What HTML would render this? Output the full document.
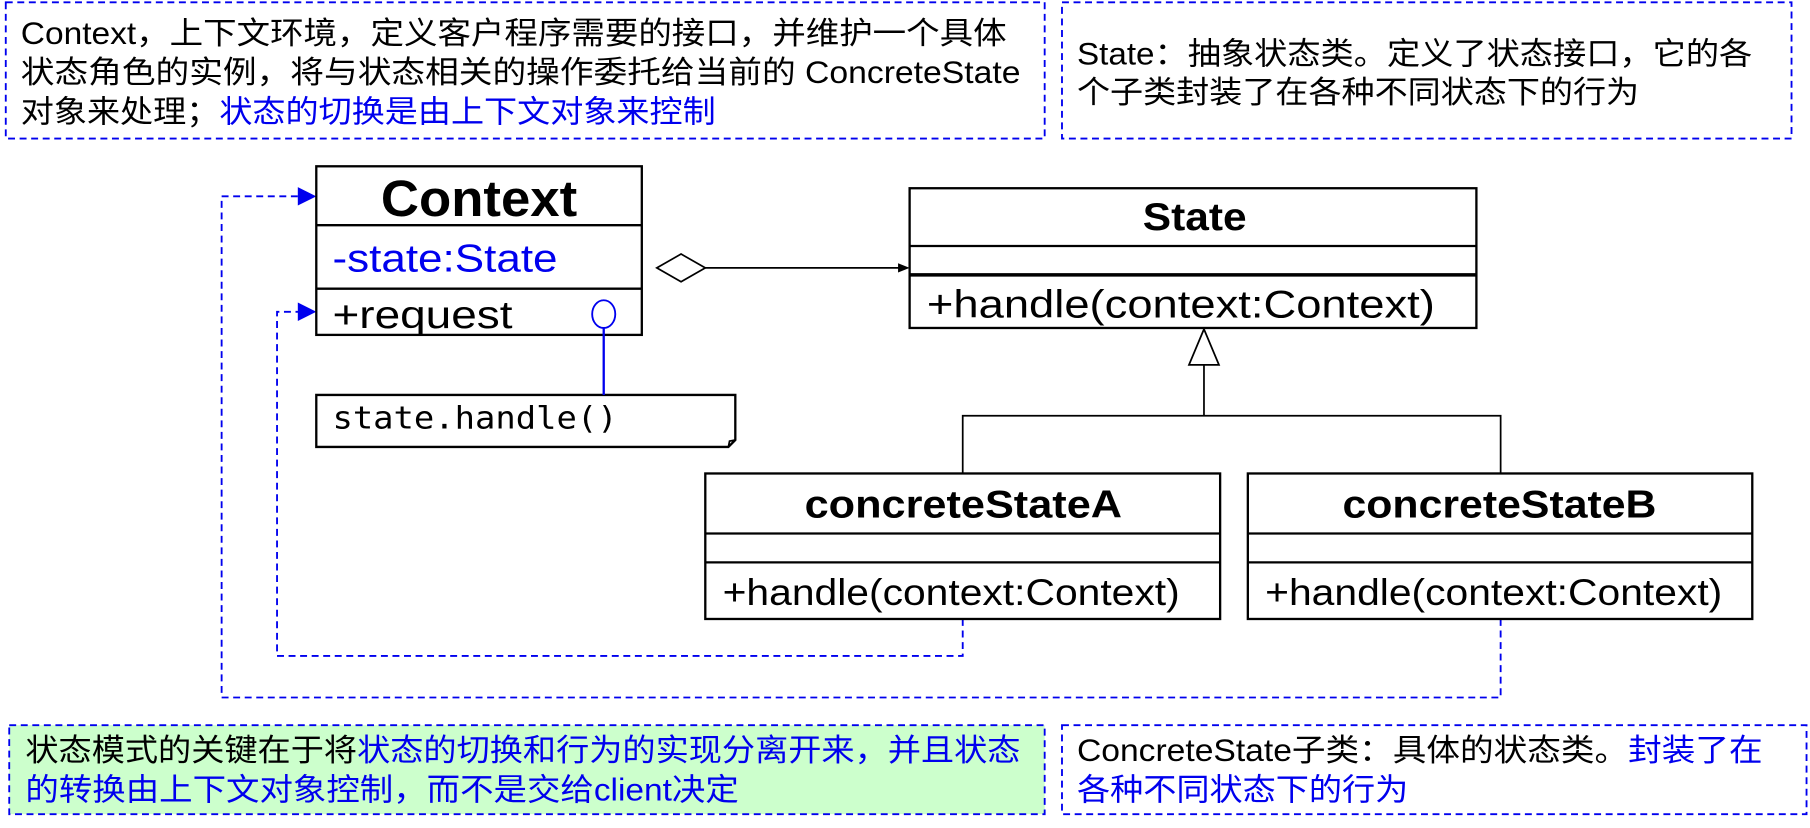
<!DOCTYPE html>
<html><head><meta charset="utf-8"><style>
html,body{margin:0;padding:0;background:#fff;}
svg{display:block;}
text{font-family:"Liberation Sans","Noto Sans CJK SC",sans-serif;}
</style></head><body>
<svg width="1810" height="828" viewBox="0 0 1568 717" preserveAspectRatio="none" xmlns="http://www.w3.org/2000/svg">
<g fill="none" stroke="#0000ee" stroke-width="1.6" stroke-dasharray="6,4">
<rect x="5" y="2" width="900" height="118"/>
<rect x="920" y="2" width="632" height="118"/>
<rect x="8" y="628" width="897" height="77" fill="#ccffcc"/>
<rect x="920" y="628" width="645" height="77"/>
<polyline points="834,536 834,568 240,568 240,270 260,270"/>
<polyline points="1300,536 1300,604 192,604 192,170 260,170"/>
</g>
<polygon points="258,162 274,170 258,178" fill="#0000ee"/>
<polygon points="258,262 274,270 258,278" fill="#0000ee"/>
<g font-size="27" fill="#000" lengthAdjust="spacingAndGlyphs">
<text x="18" y="38" textLength="854" lengthAdjust="spacingAndGlyphs">Context，上下文环境，定义客户程序需要的接口，并维护一个具体</text>
<text x="18" y="72" textLength="866" lengthAdjust="spacingAndGlyphs">状态角色的实例，将与状态相关的操作委托给当前的 ConcreteState</text>
<text x="18" y="106" textLength="602" lengthAdjust="spacingAndGlyphs">对象来处理；<tspan fill="#0000ee">状态的切换是由上下文对象来控制</tspan></text>
<text x="933" y="56" textLength="585" lengthAdjust="spacingAndGlyphs">State：抽象状态类。定义了状态接口，它的各</text>
<text x="933" y="89" textLength="487" lengthAdjust="spacingAndGlyphs">个子类封装了在各种不同状态下的行为</text>
<text x="22" y="659" textLength="862" lengthAdjust="spacingAndGlyphs">状态模式的关键在于将<tspan fill="#0000ee">状态的切换和行为的实现分离开来，并且状态</tspan></text>
<text x="22" y="693" fill="#0000ee" textLength="618" lengthAdjust="spacingAndGlyphs">的转换由上下文对象控制，而不是交给client决定</text>
<text x="933" y="659" textLength="594" lengthAdjust="spacingAndGlyphs">ConcreteState子类：具体的状态类。<tspan fill="#0000ee">封装了在</tspan></text>
<text x="933" y="693" fill="#0000ee" textLength="287" lengthAdjust="spacingAndGlyphs">各种不同状态下的行为</text>
</g>
<g fill="#fff" stroke="#000" stroke-width="2">
<rect x="274" y="144" width="282" height="146"/>
<line x1="274" y1="195" x2="556" y2="195"/>
<line x1="274" y1="250" x2="556" y2="250"/>
<rect x="788" y="163" width="491" height="121"/>
<line x1="788" y1="213" x2="1279" y2="213"/>
<line x1="788" y1="238" x2="1279" y2="238" stroke-width="3"/>
<rect x="611" y="410" width="446" height="126"/>
<line x1="611" y1="462" x2="1057" y2="462"/>
<line x1="611" y1="487" x2="1057" y2="487"/>
<rect x="1081" y="410" width="437" height="126"/>
<line x1="1081" y1="462" x2="1518" y2="462"/>
<line x1="1081" y1="487" x2="1518" y2="487"/>
<path d="M274,342 H637 V381 L631,387 H274 Z"/>
<path d="M631,387 L632,382 L637,381" fill="none" stroke-width="1.5"/>
</g>
<line x1="523" y1="282" x2="523" y2="342" stroke="#0000ee" stroke-width="2"/>
<ellipse cx="523" cy="272" rx="10" ry="12" fill="#fff" stroke="#0000ee" stroke-width="1.6"/>
<polygon points="569,232 590,220 611,232 590,244" fill="#fff" stroke="#000" stroke-width="1.5"/>
<line x1="611" y1="232" x2="782" y2="232" stroke="#000" stroke-width="1.5"/>
<polygon points="778,228 788,232 778,236" fill="#000"/>
<polygon points="1043,285 1030,316 1056,316" fill="#fff" stroke="#000" stroke-width="1.5"/>
<polyline points="1043,316 1043,360" fill="none" stroke="#000" stroke-width="1.5"/>
<polyline points="834,410 834,360 1300,360 1300,410" fill="none" stroke="#000" stroke-width="1.5"/>
<g fill="#000">
<text x="330" y="187" font-size="44" font-weight="bold" textLength="170" lengthAdjust="spacingAndGlyphs">Context</text>
<text x="288" y="235" font-size="34" fill="#0000ee" textLength="195" lengthAdjust="spacingAndGlyphs">-state:State</text>
<text x="288" y="284" font-size="34" textLength="156" lengthAdjust="spacingAndGlyphs">+request</text>
<text x="990" y="199" font-size="34" font-weight="bold" textLength="90" lengthAdjust="spacingAndGlyphs">State</text>
<text x="803" y="275" font-size="34" textLength="440" lengthAdjust="spacingAndGlyphs">+handle(context:Context)</text>
<text x="697" y="448" font-size="34" font-weight="bold" textLength="275" lengthAdjust="spacingAndGlyphs">concreteStateA</text>
<text x="626" y="524" font-size="32" textLength="396" lengthAdjust="spacingAndGlyphs">+handle(context:Context)</text>
<text x="1163" y="448" font-size="34" font-weight="bold" textLength="272" lengthAdjust="spacingAndGlyphs">concreteStateB</text>
<text x="1096" y="524" font-size="32" textLength="396" lengthAdjust="spacingAndGlyphs">+handle(context:Context)</text>
<text x="288" y="371" font-size="27" textLength="247" lengthAdjust="spacingAndGlyphs" style="font-family:'DejaVu Sans Mono','Liberation Mono',monospace">state.handle()</text>
</g>
</svg>
</body></html>
